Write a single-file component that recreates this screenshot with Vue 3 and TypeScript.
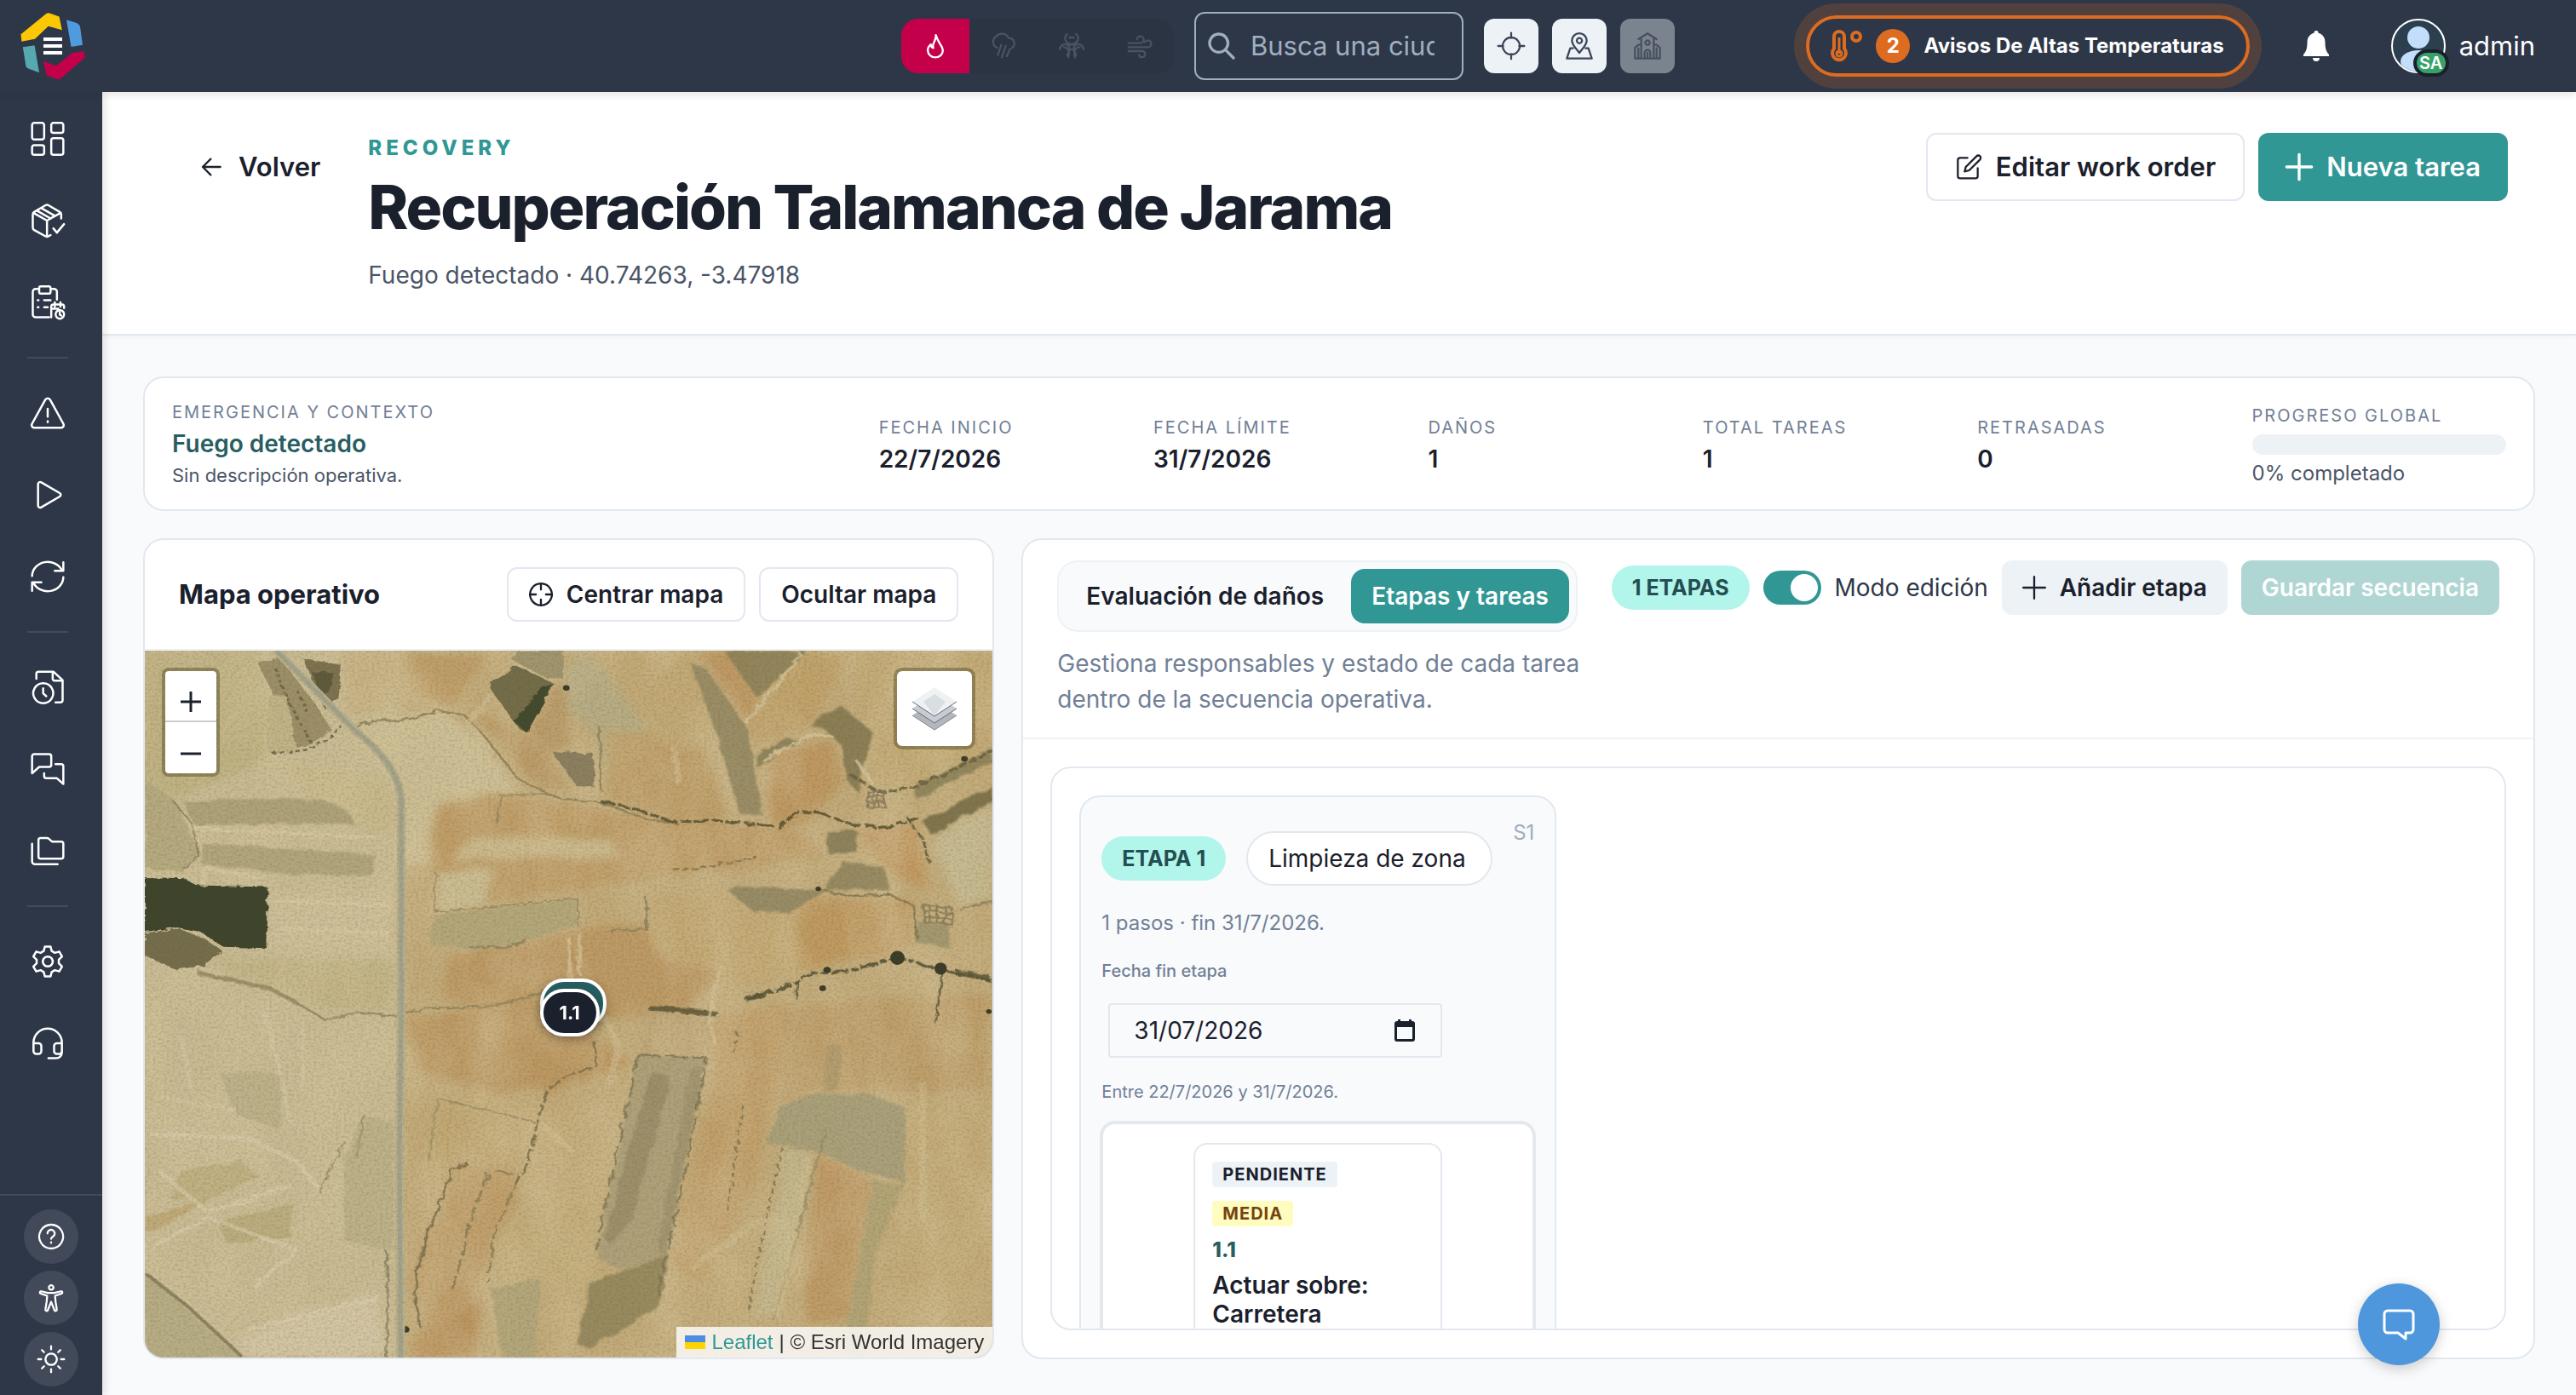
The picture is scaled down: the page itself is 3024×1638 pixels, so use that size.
<script setup lang="ts">
import { ref } from 'vue'

interface Field {
  d: string
  fill: string
}

interface Line {
  d: string
  stroke: string
  w: number
  o?: number
  dash?: string
}

const navGroups: string[][] = [
  [
    'M2.500 .8h5.500a1.500 1.500 0 0 1 1.500 1.500v8.700a1.500 1.500 0 0 1-1.500 1.500H2.500A1.500 1.500 0 0 1 1 11V2.300A1.500 1.500 0 0 1 2.500 .8zM16 .8h5.500A1.500 1.500 0 0 1 23 2.300v4a1.500 1.500 0 0 1-1.500 1.500H16a1.500 1.500 0 0 1-1.500-1.500v-4A1.500 1.500 0 0 1 16 .8zM2.500 16.500H8A1.500 1.500 0 0 1 9.500 18v3.700A1.500 1.500 0 0 1 8 23.200H2.500A1.500 1.500 0 0 1 1 21.700V18a1.500 1.500 0 0 1 1.500-1.500zM16 11.500h5.500A1.500 1.500 0 0 1 23 13v8.700a1.500 1.500 0 0 1-1.500 1.500H16a1.500 1.500 0 0 1-1.500-1.500V13a1.500 1.500 0 0 1 1.500-1.500z',
    'M21.500 10.500V7.500a2 2 0 0 0-1-1.600L12.500 1.200a2 2 0 0 0-2 0L2.500 5.900a2 2 0 0 0-1 1.600v9.500a2 2 0 0 0 1 1.700l8 4.400a2 2 0 0 0 2 0l1.500-.9M1.800 6.500l9.700 5.500 9.700-5.500M11.500 12v11M4.500 5l9.500 5.500M7.500 3.200l9.500 5.400M14 10.500l3-1.900M16 17.500l2.500 3 5-6',
    'M13 22.500H3.500A2 2 0 0 1 1.500 20.500V4.500a2 2 0 0 1 2-2H6M14 2.500h2.500a2 2 0 0 1 2 2V10M7 .8h6a1 1 0 0 1 1 1v3a1 1 0 0 1-1 1H7a1 1 0 0 1-1-1v-3a1 1 0 0 1 1-1zM5 10.500h.5M9.500 10.500H14M5 15.500h.5M9.500 15.500H12M14.500 22.500V15a1.500 1.500 0 0 1 1.500-1.500h6A1.500 1.500 0 0 1 23.500 15v1M14.500 16.500h5M17 12v3M21 12v3M20.500 17.500a3 3 0 1 0 .1 0zM20.500 19v1.700l1 .6',
  ],
  [
    'M10.200 2.800L1 19.500a1.800 1.800 0 0 0 1.700 2.800h18.600A1.800 1.800 0 0 0 23 19.500L13.800 2.800a2 2 0 0 0-3.600 0zM12 9v5.500M12 17.700v.8',
    'M7.500 3.200l13 7.600a1.400 1.400 0 0 1 0 2.400l-13 7.600A1.500 1.500 0 0 1 5.200 19.500v-15a1.500 1.500 0 0 1 2.300-1.300z',
    'M1 11.500A11 10 0 0 1 22 7.500M23 2v6h-6M23 12.500A11 10 0 0 1 2 16.500M1 22v-6h6.500',
  ],
  [
    'M4 6V2.500A1.500 1.500 0 0 1 5.500 1H16l6.500 6v14a1.700 1.700 0 0 1-1.700 1.700H17.500M15.500 1v5a1.300 1.300 0 0 0 1.300 1.300h5.700M8.800 9.200a7 7 0 1 0 .1 0zM8.800 12.800v3.500l2.200 2',
    'M2.500 1.500h10.500A1.500 1.500 0 0 1 14.500 3v6a1.500 1.500 0 0 1-1.500 1.500H6L1 15V3a1.500 1.500 0 0 1 1.500-1.500zM17.500 8.500h4A1.500 1.500 0 0 1 23 10v12.500l-4.500-4H11A1.500 1.500 0 0 1 9.500 17v-2',
    'M7 3h4.500a2 2 0 0 1 1.300.5L15 5.500h6.500A1.500 1.500 0 0 1 23 7v9a1.500 1.500 0 0 1-1.500 1.500H7A1.500 1.500 0 0 1 5.500 16V4.500A1.500 1.500 0 0 1 7 3zM1 7v12.500A2 2 0 0 0 3 21.500h16',
  ],
  [
    'M10 1.500h4l.8 3.100 2.200 1.300 3.100-.9 2 3.500-2.300 2.200v2.600l2.300 2.200-2 3.500-3.100-.9-2.200 1.300-.8 3.100h-4l-.8-3.100L7 18.100l-3.100.9-2-3.500 2.300-2.200v-2.600L1.900 8.500l2-3.500 3.100.9 2.200-1.300zM12 8.500a3.500 3.500 0 1 0 .1 0z',
    'M2 15v-3.500a10 9.800 0 0 1 20 0V18.500a4 4 0 0 1-4 4H12.500M2 12h3.500a2 2 0 0 1 2 2v3.500a2 2 0 0 1-2 2H4a2 2 0 0 1-2-2zM22 12h-3.500a2 2 0 0 0-2 2v3.500a2 2 0 0 0 2 2H20a2 2 0 0 0 2-2z',
  ],
]

const helpIcons: string[] = [
  'M12 1.500a10.500 10.500 0 1 0 .1 0zM8.800 9.200a3.200 3.200 0 1 1 4.800 2.800c-1 .6-1.600 1-1.600 2M12 17v.6',
  'M12 .8a2 2 0 1 0 .1 0zM3.500 6.200l5.500 1.400h6l5.500-1.400a1 1 0 0 1 .6 2l-5.600 1.900.4 5 1.100 7a1.100 1.100 0 0 1-2.200.4L12 15.500l-2.800 7a1.100 1.100 0 0 1-2.200-.4l1.100-7 .4-5-5.600-1.900a1 1 0 0 1 .6-2z',
  'M12 7a5 5 0 1 0 .1 0zM12 .5v2.800M12 20.700v2.800M.5 12h2.800M20.700 12h2.800M3.900 3.900l1.900 1.900M18.200 18.200l1.900 1.900M20.100 3.900l-1.900 1.900M5.800 18.200l-1.900 1.900',
]

const stats = [
  { label: 'Fecha inicio', value: '22/7/2026' },
  { label: 'Fecha límite', value: '31/7/2026' },
  { label: 'Daños', value: '1' },
  { label: 'Total tareas', value: '1' },
  { label: 'Retrasadas', value: '0' },
]

// Broad ground colours, drawn very soft
const fields: Field[] = [
  { d: 'M15 24h460v1516H15z', fill: '#c9bc94' },
  { d: 'M480 24h1070v1516H480z', fill: '#c3ab7a' },
  { d: 'M15 24h200l30 120-10 110-170 90-50-40z', fill: '#c0b384' },
  { d: 'M380 190l170-40 80 70 60 110-20 130-190 20-15-170z', fill: '#cdbf95' },
  { d: 'M360 24h280l-50 130-120-20-80 40z', fill: '#c7b283' },
  { d: 'M480 24h160l-60 120-70-20z', fill: '#bf9f69' },
  { d: 'M620 170l70 20 50 60 50 80-60-10-60-80z', fill: '#bb9b66' },
  { d: 'M770 90l20 140-50 15-35-60z', fill: '#b89864' },
  { d: 'M770 50l50-20 110 170-80 110-20-110-50-50z', fill: '#b8ad84' },
  { d: 'M850 200l160-10 60 190-90 10-130-50z', fill: '#bf9f69' },
  { d: 'M830 24h170l60 150-50 60-60 0-80-120z', fill: '#c3aa77' },
  { d: 'M1020 24h60l40 110-20 40z', fill: '#bf9a64' },
  { d: 'M1200 24h90l-60 150-100 60-25-50z', fill: '#c1a36b' },
  { d: 'M1140 250l110-40 30 90-70 90-60 10z', fill: '#bf9962' },
  { d: 'M1290 24h255v220l-140 80-80-10-20-160z', fill: '#c4ab77' },
  { d: 'M1435 430l110-80v200l-60 20z', fill: '#c6ba91' },
  { d: 'M540 350l130-20 200 40 330 40 50 60-250 30-370 60-90 20-10-120z', fill: '#c09e68' },
  { d: 'M560 470l50-50 250 10 10 40z', fill: '#cbb98b' },
  { d: 'M540 500l110-10-20 80-90 15z', fill: '#cbbd92' },
  { d: 'M560 680l240-60 250-20 20 130-120 90-240-10-150-30z', fill: '#be9b66' },
  { d: 'M920 560l140-20 60 50 110-40 10 140-120 50-180-60z', fill: '#c3a872' },
  { d: 'M1190 560l200-10 20 100-50 30-170 20z', fill: '#c09b62' },
  { d: 'M1300 410l110-20 20 150-70-40z', fill: '#c29860' },
  { d: 'M485 810l240-30 100 70 70 60-180 80-200-60z', fill: '#bd9963' },
  { d: 'M500 1000l230-40 90 100-110 80-180-30z', fill: '#c4ab79' },
  { d: 'M545 985l180 50 0 120-200-35z', fill: '#c2a874' },
  { d: 'M915 800l125 5-10 90-125-5z', fill: '#bea576' },
  { d: 'M1040 810l130-30 0 90-60 300-80 220-70-60 80-370z', fill: '#c2a16c' },
  { d: 'M1170 790l370-30v200l-150 10-130-20-100 50z', fill: '#bfa06c' },
  { d: 'M1390 1000l155 20v350l-155 80z', fill: '#c4ac79' },
  { d: 'M1225 1110l110 40-50 300-80 20z', fill: '#c09c67' },
  { d: 'M1170 1090l55 15-70 350-45-5z', fill: '#c4b68c' },
  { d: 'M580 1120l120 30-90 260-90 80-25-120z', fill: '#c1a06c' },
  { d: 'M690 1170l150 20 0 190-210 10z', fill: '#c4ae7c' },
  { d: 'M490 1500l140-90-20 130h-120z', fill: '#bc955f' },
  { d: 'M250 270l200 20 15 130-90-20-60-60z', fill: '#c9ba8d' },
  { d: 'M240 540l225 0v140l-225-20z', fill: '#cdbf98' },
  { d: 'M110 680l350 10 0 110-110 0-120-60z', fill: '#c4b689' },
  { d: 'M180 1500l250-100 20 140H200z', fill: '#d3c6a6' },
]

// Fields with a visible outline
const strips: Field[] = [
  { d: 'M1060 24h150l-90 100z', fill: '#8f8259' },
  { d: 'M1000 50l30 15 75 130 25 180-40 0-45-180z', fill: '#978b64' },
  { d: 'M1120 250l55-38 20 4-75 60z', fill: '#8d825b' },
  { d: 'M1215 185l55-45 60 60-20 80-5 50-25-30-5-70-35-40z', fill: '#877b53' },
  { d: 'M1405 315l140-80v25l-135 85z', fill: '#8f845b' },
  { d: 'M1420 390l125-75v30l-110 75z', fill: '#7a7049' },
  { d: 'M535 590l260-35v55l-90 35-80 22-95-15z', fill: '#b3a87b' },
  { d: 'M1065 535l70-5 110 10-70 45-60 0z', fill: '#958a65' },
  { d: 'M1275 475l75 15 10 50-120-5z', fill: '#948861' },
  { d: 'M1245 410h55v45l-50 5z', fill: '#8a7f59' },
  { d: 'M1410 605l60 8v50l-65-15z', fill: '#a1976f' },
  { d: 'M905 890l125 8-75 440-20-5-60 20-45-30z', fill: '#ada17a' },
  { d: 'M930 925l35 15-70 300-40 60-10-20z', fill: '#998d69' },
  { d: 'M1000 920l25 0-70 400-15-10z', fill: '#a09470' },
  { d: 'M1165 1000l50-25h110l65 30-3 160-90-30-60-35-100-20z', fill: '#a8a07b' },
  { d: 'M1330 1160l55 10-50 150-20 220-40-10z', fill: '#b3a577' },
  { d: 'M1245 870h28l-5 100h-28z', fill: '#b39e70' },
  { d: 'M640 1395l90-25-10 170h-60z', fill: '#b3a77c' },
  { d: 'M820 1380l140-60-15 110-130 90-20-10z', fill: '#94885e' },
  { d: 'M85 350l120-10 130 5q55 15 55 50l-285 3z', fill: '#aca178' },
  { d: 'M120 437l310 25-5 45-160-5-150-20z', fill: '#afa47b' },
  { d: 'M15 300l55 45 45 115-30 40-70-10z', fill: '#b4a97f' },
  { d: 'M150 930l115 0-5 120-80-30z', fill: '#bdb18a' },
  { d: 'M410 1020l55 20v270l-90-20 0-180z', fill: '#bcb188' },
  { d: 'M60 1200l20-60 110-20 30 30-100 60z', fill: '#c0b083' },
  { d: 'M150 1250l130-40 0 70-120 15z', fill: '#bbad7e' },
  { d: 'M15 1240l110-40-80 60-30 10z', fill: '#bfa878' },
  { d: 'M15 1355l170 185H15z', fill: '#b5ac84' },
]

// Trees, scrub and built-up ground
const woods: Field[] = [
  { d: 'M15 510l70 2 25 15 126 4-2 131-78-3-40-32-45-10-56 10z', fill: '#3e452c' },
  { d: 'M15 630l60-10 45 20 32 25-30 35-50 8-57-30z', fill: '#756e4d' },
  { d: 'M685 55l70 40-50 105-15-10-55-90z', fill: '#746d4a' },
  { d: 'M735 100l18-5-48 105-22-22z', fill: '#434a2e' },
  { d: 'M690 24h80v60l-30-2-65-40z', fill: '#a2966f' },
  { d: 'M218 48l40-8 60 90 35 65-40 30-60 20 20-60-20-50z', fill: '#9d9069' },
  { d: 'M300 40l70 15-5 70-25 25z', fill: '#7d7350' },
  { d: 'M315 70l40 0-5 40-15 10z', fill: '#5f5a3d' },
  { d: 'M240 120l30 0 20 120-52 4z', fill: '#c2b489' },
  { d: 'M750 240l75 5 0 70-30 0z', fill: '#8c8060' },
]

const lines: Line[] = [
  { d: 'M385 190l50-15 60-5 50-18 45 8 40 50 60 90 70 40 80 10 80 35 60 10', stroke: '#8d8058', w: 4 },
  { d: 'M835 345l70 20 60 25 60-2 65 5 70 10 35-35 40 5 60 25 60 5 55-20', stroke: '#55502f', w: 6, dash: '30 7 18 4' },
  { d: 'M1290 290l50 38 60-10 60-30 85-50', stroke: '#6a6341', w: 7, dash: '16 4' },
  { d: 'M1390 380l30 50 12 50', stroke: '#5b5738', w: 4, dash: '15 5' },
  { d: 'M110 715l60 15 70 18 50 32 50 35 60-15 70 8 50-18 60 0 60-5 55-12 40-20 60 10', stroke: '#8b7f58', w: 4 },
  { d: 'M110 715l60 15 70 18 50 32', stroke: '#9c9069', w: 9 },
  { d: 'M1100 772l70-25 50-30 60-5 60-18 35-12 70 25 100 25', stroke: '#4c4b2f', w: 6, dash: '34 5 12 4' },
  { d: 'M1100 770l38-8M925 790l60 5 65 10M1480 715l60 10', stroke: '#5a5637', w: 11 },
  { d: 'M1230 535l50 15 80-3 45 25 5 70', stroke: '#7e744e', w: 4 },
  { d: 'M1455 715l-12 110M1193 735l-3 35', stroke: '#5b5738', w: 4 },
  { d: 'M825 860l5 55-60 25-30 30-15 60-20 100-20 40', stroke: '#716744', w: 4, dash: '26 6' },
  { d: 'M600 1125l-30 12-25 80-20 60-18 80-5 60 12 60', stroke: '#756b48', w: 4 },
  { d: 'M650 1140l40 8M635 1145l-35 110-30 150M690 1150l-45 130-10 100', stroke: '#857a54', w: 4, dash: '30 8' },
  { d: 'M905 890l-40 220-35 200M905 890l125 8-40 250-50 260', stroke: '#7e7453', w: 4, dash: '40 10' },
  { d: 'M1095 1000l-28 230M1165 1090l-45 250-15 100M1085 840l-8 50', stroke: '#716946', w: 3, dash: '10 8' },
  { d: 'M1245 1050l-95 410', stroke: '#9d9168', w: 4 },
  { d: 'M65 345l35 50 12 70-30 25', stroke: '#8d825b', w: 3 },
  { d: 'M540 500l0 85 255-30 3 60M660 335l-10 60M655 335l90-5', stroke: '#978b62', w: 3 },
  { d: 'M835 185l5 140M600 660l60 2 45-18M855 625l65-3v-70', stroke: '#8f835c', w: 4 },
  { d: 'M970 495l50-5 100-25', stroke: '#6f6542', w: 3, dash: '12 4' },
  { d: 'M545 985l-18 130M545 985l175 50M375 1075l-45 110M410 1020l-12 90', stroke: '#9a8d66', w: 3 },
  { d: 'M780 640l3 90M800 630v90M1055 700l-20 110 10 60', stroke: '#d5c39a', w: 7, o: 0.7 },
  { d: 'M1100 180l100-150M1130 260l90-60 40 10M1330 310l-30-50', stroke: '#d6c59b', w: 6, o: 0.8 },
  { d: 'M640 120l-40 60 40 60M970 230l10 80M840 800l30 70-15 90M730 1040l60 60', stroke: '#d3c297', w: 12, o: 0.5 },
  { d: 'M1000 1350l120-100 60 0M1215 1110l-60 340M1420 950l0 300', stroke: '#d0bf92', w: 14, o: 0.5 },
  { d: 'M20 1060l180 10 90 50 40 60M40 1140l90 90 150-60M130 1240l160 70-80 80M130 1240l-100 60M200 1480l240-70', stroke: '#dacdae', w: 9, o: 0.6 },
  { d: 'M80 850l20 120M230 800l30 130 20 120M300 820l0 150M40 980l140 30', stroke: '#d8caa6', w: 8, o: 0.5 },
  { d: 'M100 405l330 20M250 560l210 10M120 530l0-40 100 20M260 620l200 10', stroke: '#d8c9a2', w: 9, o: 0.6 },
  { d: 'M15 1358l80 75 95 105', stroke: '#827858', w: 7 },
  { d: 'M22 1356l80 75 95 105', stroke: '#d0c29c', w: 3 },
  { d: 'M450 1310l5 120-5 110M1545 560l-60 20', stroke: '#8b8160', w: 4 },
  { d: 'M245 245l60-8 40-22 25-30M250 60l20 60 30 70 20 40M290 110l20 50', stroke: '#6c6444', w: 5, dash: '8 6' },
]

const hazardIcons: string[] = [
  'M6.500 13.500A5.500 5.500 0 0 1 5.500 3.700 6.500 6.500 0 0 1 16.500 5a4.800 4.800 0 0 1 2.500 9M10 11l-3 9M14 12l-3.500 10M17.500 15l-2.500 6',
  'M8 1.500a5.500 5 0 0 0 2.500 8.500M16 1.500a5.500 5 0 0 1-2.500 8.500M10 4.500h4M12 10.500a2.300 2.300 0 1 0 .1 0zM9.800 12L7 10.500a5 5 0 0 0-5.500 4.500M14.200 12l2.800-1.500a5 5 0 0 1 5.500 4.500M5 13c3 0 6 3 4 9M19 13c-3 0-6 3-4 9M10.500 15l-2.500 5M13.500 15l2.500 5',
  'M2 9.500h10.500a3 3 0 1 0-3-3.200M2 13h17.500a3 3 0 1 0-3-4.500M2 16.500h12a2.700 2.700 0 1 1-2.700 3.200',
]

const search = ref('')
const editMode = ref(true)
const stageName = ref('Limpieza de zona')
const stageDate = ref('31/07/2026')
</script>

<template>
  <div class="app">
    <header class="topbar">
      <a class="logo" href="#" aria-label="Inicio">
        <svg viewBox="24 14 76 78" width="76" height="78">
          <path fill="#fbc803" d="M25.400 47.700L24.500 39.300 54 15.200Q56.500 13.800 59 14.700L69.500 18.600 72.800 34.300 56.700 29.700 41 44.700z" />
          <path fill="#4f9bdf" d="M78 22.300L90 26Q93 27.500 94 30L97 51.700 83.500 54z" />
          <path fill="#56a9b0" d="M26.800 54.300L40.600 52.300 46 84.300 34 79.700Q31 78.500 30.400 76.700z" />
          <path fill="#c5004b" d="M51 71L66 76.300 84.800 61.300 98.700 59 99.600 66.700 71.400 91Q69 92.600 66.500 91.700L54.500 87.300z" />
          <path fill="#fff" d="M51 43h22v4H51zM51 51h22v4H51zM51 59h22v4H51z" />
        </svg>
      </a>
      <div class="tools">
        <div class="hazards">
          <button class="hazard on" type="button" aria-label="Incendios">
            <svg class="ic28" viewBox="0 0 24 24"><path d="M12.500 1c.5 4-1.500 6-2.500 9-.5 1.500-.5 3 0 4-1.500-.5-2.500-1.800-2.500-3.500C5 12.500 4 14.500 4.500 17a7.500 6.500 0 0 0 15 0c.3-3-1.500-5-3-7.500-1.500-2.600-3-5-4-8.500z" /></svg>
          </button>
          <button v-for="d in hazardIcons" :key="d" class="hazard" type="button" aria-label="Riesgo" disabled>
            <svg class="ic32" viewBox="0 0 24 24"><path :d="d" /></svg>
          </button>
        </div>
        <label class="search">
          <svg class="ic32 bold" viewBox="0 0 24 24"><path d="M9.500 1.500a8 8 0 1 0 .1 0zM15.500 15.500l7 7" /></svg>
          <input v-model="search" type="text" placeholder="Busca una ciudad" aria-label="Buscar" />
        </label>
        <div class="quick">
          <button type="button" aria-label="Ubicación">
            <svg class="ic32" viewBox="0 0 24 24"><path d="M12 4.500a7.500 7.500 0 1 0 .1 0zM12 .5v4.500M12 19v4.500M.5 12H5M19 12h4.500" /></svg>
          </button>
          <button type="button" aria-label="Mapa">
            <svg class="ic32" viewBox="0 0 24 24"><path d="M12 18c-3-4-6.500-7-6.500-10.700a6.500 6.500 0 0 1 13 0C18.500 11 15 14 12 18zM12 5a2.300 2.300 0 1 0 .1 0zM6.500 14H4L1 23h22l-3-9h-2.500" /></svg>
          </button>
          <button type="button" aria-label="Municipio" disabled>
            <svg class="ic32" viewBox="0 0 24 24"><path d="M4 6l8-5 8 5M6.500 5v18M17.500 5v18M6.500 11H4l-3 2.500V23h22v-9.500L20 11h-2.500M12 7a2 2 0 1 0 .1 0zM9.500 23v-5a2.500 2.500 0 0 1 5 0v5M12 18v5M4 14v9M20 14v9" /></svg>
          </button>
        </div>
      </div>
      <div class="account">
        <button class="warning" type="button">
          <svg viewBox="0 0 38 38" width="38" height="38" fill="none" stroke="#dd6b20" stroke-width="4">
            <path d="M5 22V8a6 6 0 0 1 12 0V22a8 8 0 1 1-12 0z" />
            <path d="M11 9v19" stroke-width="3" />
            <circle cx="11" cy="28" r="3" stroke-width="3" />
            <circle cx="31" cy="8" r="5" />
          </svg>
          <span class="count">2</span>
          <span>Avisos De Altas Temperaturas</span>
        </button>
        <button class="bell" type="button" aria-label="Notificaciones">
          <svg viewBox="0 0 32 36" width="32" height="36" fill="#fff"><path d="M16 0a2.500 2.500 0 0 1 2.500 2.800c5 1.300 8 5.500 8 10.700 0 8 1.500 11 4.500 14.500V30H1v-2c3-3.500 4.500-6.500 4.500-14.500 0-5.200 3-9.400 8-10.700A2.500 2.500 0 0 1 16 0zM12 32h8a4 4 0 0 1-8 0z" /></svg>
        </button>
        <a class="user" href="#">
          <span class="avatar">
            <svg viewBox="0 0 64 64" width="64" height="64">
              <defs><clipPath id="av"><circle cx="32" cy="32" r="30" /></clipPath></defs>
              <circle cx="32" cy="32" r="31" fill="#2c3f4e" stroke="#fff" stroke-width="2" />
              <circle cx="32" cy="22" r="13" fill="#c3defa" />
              <ellipse cx="32" cy="50" rx="21" ry="13" fill="#c3defa" clip-path="url(#av)" />
            </svg>
            <span class="role">SA</span>
          </span>
          <span>admin</span>
        </a>
      </div>
    </header>

    <aside class="sidebar">
      <nav>
        <ul v-for="(group, g) in navGroups" :key="g">
          <li v-for="d in group" :key="d">
            <a href="#" aria-label="Sección"><svg class="ic40" viewBox="0 0 24 24"><path :d="d" /></svg></a>
          </li>
        </ul>
      </nav>
      <div class="help">
        <button v-for="d in helpIcons" :key="d" type="button" aria-label="Ayuda">
          <svg class="ic32" viewBox="0 0 24 24"><path :d="d" /></svg>
        </button>
      </div>
    </aside>

    <main>
      <section class="pagehead">
        <button class="btn ghost" type="button">
          <svg class="ic32" viewBox="0 0 24 24"><path d="M20 12H4.500M11.500 5l-7 7 7 7" /></svg>Volver
        </button>
        <div class="heading">
          <p class="kicker">RECOVERY</p>
          <h1>Recuperación Talamanca de Jarama</h1>
          <p class="sub">Fuego detectado · 40.74263, -3.47918</p>
        </div>
        <div class="actions">
          <button class="btn outline" type="button">
            <svg class="ic32" viewBox="0 0 24 24"><path d="M11 4H4.500A2 2 0 0 0 2.500 6v14a2 2 0 0 0 2 2H18a2 2 0 0 0 2-2v-7M19 2.500a2 2 0 0 1 3 3L12.500 15l-4 1 1-4z" /></svg>Editar work order
          </button>
          <button class="btn primary" type="button">
            <svg class="ic32 bold" viewBox="0 0 24 24"><path d="M12 1v22M1 12h22" /></svg>Nueva tarea
          </button>
        </div>
      </section>

      <div class="content">
        <section class="summary">
          <div>
            <p class="label">EMERGENCIA Y CONTEXTO</p>
            <p class="value teal">Fuego detectado</p>
            <p class="note">Sin descripción operativa.</p>
          </div>
          <div v-for="s in stats" :key="s.label">
            <p class="label">{{ s.label.toUpperCase() }}</p>
            <p class="value">{{ s.value }}</p>
          </div>
          <div>
            <p class="label">PROGRESO GLOBAL</p>
            <div class="bar" role="progressbar" aria-valuenow="0" aria-valuemin="0" aria-valuemax="100"></div>
            <p class="done">0% completado</p>
          </div>
        </section>

        <div class="panels">
          <section class="card mapcard">
            <div class="maphead">
              <h2>Mapa operativo</h2>
              <button class="btn small outline" type="button">
                <svg class="ic28" viewBox="0 0 24 24"><path d="M12 1a11 11 0 1 0 .1 0zM12 1v6M12 17v6M1 12h6M17 12h6" /></svg>Centrar mapa
              </button>
              <button class="btn small outline" type="button">Ocultar mapa</button>
            </div>
            <div class="map">
              <svg class="terrain" viewBox="15 24 1531 1516" preserveAspectRatio="none" aria-hidden="true">
                <defs>
                  <filter id="soft" x="-5%" y="-5%" width="110%" height="110%" color-interpolation-filters="sRGB">
                    <feTurbulence type="fractalNoise" baseFrequency="0.012" numOctaves="3" seed="4" result="n" />
                    <feDisplacementMap in="SourceGraphic" in2="n" scale="24" />
                    <feGaussianBlur stdDeviation="9" />
                  </filter>
                  <filter id="strip" x="-5%" y="-5%" width="110%" height="110%" color-interpolation-filters="sRGB">
                    <feTurbulence type="fractalNoise" baseFrequency="0.040" numOctaves="3" seed="14" result="n" />
                    <feDisplacementMap in="SourceGraphic" in2="n" scale="12" />
                    <feGaussianBlur stdDeviation="2" />
                  </filter>
                  <filter id="edge" x="-5%" y="-5%" width="110%" height="110%" color-interpolation-filters="sRGB">
                    <feTurbulence type="fractalNoise" baseFrequency="0.060" numOctaves="3" seed="9" result="n" />
                    <feDisplacementMap in="SourceGraphic" in2="n" scale="12" />
                    <feGaussianBlur stdDeviation="1" />
                  </filter>
                  <filter id="light" x="0" y="0" width="100%" height="100%" color-interpolation-filters="sRGB">
                    <feTurbulence type="fractalNoise" baseFrequency="0.010 0.005" numOctaves="3" seed="21" />
                    <feColorMatrix values="0 0 0 0 0.840  0 0 0 0 0.780  0 0 0 0 0.620  0 2 0 0 -0.700" />
                  </filter>
                  <filter id="grain" x="0" y="0" width="100%" height="100%" color-interpolation-filters="sRGB">
                    <feTurbulence type="fractalNoise" baseFrequency="0.200" numOctaves="3" seed="3" />
                    <feColorMatrix values="0 0 0 0 0.350  0 0 0 0 0.300  0 0 0 0 0.180  0 1.400 0 0 -0.550" />
                  </filter>
                </defs>
                <rect x="15" y="24" width="1531" height="1516" fill="#c6b68c" />
                <g filter="url(#soft)">
                  <path v-for="f in fields" :key="f.d" :d="f.d" :fill="f.fill" />
                </g>
                <rect x="15" y="24" width="1531" height="1516" filter="url(#light)" opacity="0.500" />
                <g filter="url(#strip)" opacity="0.900">
                  <path v-for="f in strips" :key="f.d" :d="f.d" :fill="f.fill" />
                </g>
                <g filter="url(#edge)">
                  <path v-for="f in woods" :key="f.d" :d="f.d" :fill="f.fill" />
                  <path
                    v-for="l in lines"
                    :key="l.d"
                    :d="l.d"
                    fill="none"
                    :stroke="l.stroke"
                    :stroke-width="l.w"
                    :stroke-dasharray="l.dash"
                    :opacity="l.o ?? 0.85"
                    stroke-linejoin="round"
                  />
                  <path d="M1320 325h30v35h-30zM1330 325v35M1340 325v35M1320 337h30M1320 349h30M1418 568l55 8v36l-50-6zM1432 570v38M1446 572v38M1460 574v38M1420 580l53 8M1420 594l53 6" fill="none" stroke="#857a59" stroke-width="3" />
                </g>
                <g fill="#3b3c27">
                  <ellipse cx="1374" cy="683" rx="13" ry="15" />
                  <ellipse cx="1452" cy="706" rx="11" ry="13" />
                  <circle cx="1247" cy="709" r="7" />
                  <circle cx="1239" cy="748" r="6" />
                  <circle cx="1495" cy="256" r="6" />
                  <circle cx="776" cy="104" r="6" />
                  <circle cx="1539" cy="798" r="5" />
                  <circle cx="1231" cy="535" r="5" />
                  <circle cx="486" cy="1480" r="7" />
                </g>
                <path d="M252 24L395 196Q475 270 478 345V800L475 1100 477 1540" fill="none" stroke="#b9b08c" stroke-width="16" />
                <path d="M252 24L395 196Q475 270 478 345V800L475 1100 477 1540" fill="none" stroke="#a3a38c" stroke-width="8" />
                <rect x="15" y="24" width="1531" height="1516" filter="url(#grain)" opacity="0.300" />
              </svg>
              <div class="zoom">
                <button type="button" aria-label="Acercar"><svg viewBox="0 0 24 24" width="24" height="24"><path d="M12 0v24M0 12h24" /></svg></button>
                <button type="button" aria-label="Alejar"><svg viewBox="0 0 24 24" width="24" height="24"><path d="M0 12h24" /></svg></button>
              </div>
              <button class="layers" type="button" aria-label="Capas">
                <svg viewBox="0 0 52 52" width="52" height="52">
                  <path d="M0 34L26 17 52 34 26 51z" fill="#b3b7bc" /><path d="M0 34L26 51 52 34" fill="none" stroke="#7c8595" stroke-width="1" />
                  <path d="M0 26L26 9 52 26 26 43z" fill="#c9cccf" /><path d="M0 26L26 43 52 26" fill="none" stroke="#5f6b80" stroke-width="1" />
                  <path d="M0 18L26 1 52 18 26 35z" fill="#eff1f3" /><path d="M13 18L26 9 39 18 26 34z" fill="#d9dee1" /><path d="M0 18L26 35 52 18" fill="none" stroke="#5f6b80" stroke-width="1" />
                </svg>
              </button>
              <span class="pin area"></span>
              <span class="pin task">1.1</span>
              <div class="credit">
                <svg viewBox="0 0 24 16" width="24" height="16"><path fill="#4c8fe0" d="M0 0h24v8H0z" /><path fill="#ffd500" d="M0 8h24v8H0z" /></svg>
                <a href="#">Leaflet</a> | © Esri World Imagery
              </div>
            </div>
          </section>

          <section class="card work">
            <div class="workhead">
              <div class="intro">
                <div class="tabs" role="tablist">
                  <button class="btn small" type="button" role="tab">Evaluación de daños</button>
                  <button class="btn small primary" type="button" role="tab">Etapas y tareas</button>
                </div>
                <p>Gestiona responsables y estado de cada tarea dentro de la secuencia operativa.</p>
              </div>
              <div class="controls">
                <span class="chip">1 ETAPAS</span>
                <label class="switch"><input v-model="editMode" type="checkbox" role="switch" />Modo edición</label>
                <button class="btn small soft" type="button">
                  <svg class="ic28" viewBox="0 0 24 24"><path d="M12 1v22M1 12h22" /></svg>Añadir etapa
                </button>
                <button class="btn small primary" type="button" disabled>Guardar secuencia</button>
              </div>
            </div>
            <div class="board">
              <article class="stage">
                <div class="stagehead">
                  <span class="chip">ETAPA 1</span>
                  <input v-model="stageName" class="stagename" type="text" aria-label="Nombre de la etapa" />
                  <span class="code">S1</span>
                </div>
                <p class="steps">1 pasos · fin 31/7/2026.</p>
                <label class="datelabel" for="stage-date">Fecha fin etapa</label>
                <div class="date">
                  <input id="stage-date" v-model="stageDate" type="text" />
                  <button type="button" aria-label="Abrir calendario">
                    <svg viewBox="0 0 24 26" width="24" height="26"><path fill="#1a202c" fill-rule="evenodd" d="M4 0h3v2h10V0h3v2h1a3 3 0 0 1 3 3v18a3 3 0 0 1-3 3H3a3 3 0 0 1-3-3V5a3 3 0 0 1 3-3h1zM3 9v14h18V9z" /></svg>
                  </button>
                </div>
                <p class="range">Entre 22/7/2026 y 31/7/2026.</p>
                <div class="lane">
                  <div class="task-card">
                    <span class="tag">PENDIENTE</span>
                    <span class="tag medium">MEDIA</span>
                    <p class="num">1.1</p>
                    <h3>Actuar sobre: Carretera</h3>
                  </div>
                </div>
              </article>
            </div>
          </section>
        </div>
      </div>
      <button class="chat" type="button" aria-label="Chat">
        <svg viewBox="0 0 40 40" width="40" height="40" fill="none" stroke="#fff" stroke-width="3" stroke-linejoin="round"><path d="M7 4h26a4 4 0 0 1 4 4v18a4 4 0 0 1-4 4h-5v7l-9-7H7a4 4 0 0 1-4-4V8a4 4 0 0 1 4-4z" /></svg>
      </button>
    </main>
  </div>
</template>

<style>
body {
  background: #f9fafc;
}
</style>

<style scoped>
* {
  box-sizing: border-box;
}
.app {
  display: grid;
  grid-template: 108px 1fr / 120px 1fr;
  height: 100vh;
  overflow: hidden;
  font: 400 28px/1.5 Inter, 'Noto Sans', sans-serif;
  color: #1a202c;
}
p, h1, h2, h3, ul {
  margin: 0;
  padding: 0;
}
button, input {
  font: inherit;
  color: inherit;
  margin: 0;
}
button {
  display: flex;
  align-items: center;
  justify-content: center;
  padding: 0;
  border: 0;
  background: none;
}
a {
  color: inherit;
  text-decoration: none;
}
svg {
  display: block;
  flex: none;
}
.ic28, .ic32, .ic40 {
  fill: none;
  stroke: currentColor;
  stroke-width: 2;
  stroke-linecap: round;
  stroke-linejoin: round;
  overflow: visible;
}
.ic28 { width: 28px; height: 28px; }
.ic32 { width: 32px; height: 32px; stroke-width: 1.7; }
.ic40 { width: 40px; height: 40px; stroke-width: 1.5; }
.ic32.bold { stroke-width: 2.5; }

.topbar {
  grid-column: 1 / -1;
  position: relative;
  z-index: 2;
  display: grid;
  grid-template-columns: 1fr auto 1fr;
  align-items: center;
  padding: 0 24px;
  background: #2d3748;
  box-shadow: 0 4px 8px rgba(60, 30, 10, 0.1);
}
.tools {
  display: flex;
  align-items: center;
  gap: 24px;
}
.logo {
  justify-self: start;
}
.hazards {
  display: flex;
  height: 64px;
  border-radius: 20px;
  overflow: hidden;
  background: #2a3443;
}
.hazard {
  width: 80px;
  color: #4b535f;
}
.hazard.on {
  background: #c5004b;
  color: #fff;
}
.search {
  display: flex;
  align-items: center;
  width: 316px;
  height: 80px;
  padding: 0 32px 0 14px;
  gap: 18px;
  border: 2px solid #a0aec0;
  border-radius: 12px;
  color: #a0aec0;
}
.search input {
  flex: 1;
  min-width: 0;
  padding: 0;
  border: 0;
  background: none;
  font-size: 31px;
}
.search input::placeholder {
  color: #a0aec0;
  opacity: 1;
}
.quick {
  display: flex;
  gap: 16px;
}
.quick button {
  width: 64px;
  height: 64px;
  border-radius: 12px;
  background: #edf2f7;
  color: #3a4558;
}
.quick button:disabled {
  background: #7b838f;
  color: #48505f;
}
.account {
  display: flex;
  align-items: center;
  justify-self: end;
  margin-right: 24px;
}
.warning {
  height: 72px;
  gap: 16px;
  padding: 0 26px 0 24px;
  border: 4px solid #dd6b20;
  border-radius: 36px;
  box-shadow: 0 0 0 14px rgba(221, 107, 32, 0.2);
  color: #fff;
  font-size: 24px;
  font-weight: 700;
}
.count {
  width: 40px;
  height: 40px;
  line-height: 40px;
  border-radius: 50%;
  background: #dd6b20;
}
.bell {
  margin: 0 72px 0 62px;
}
.user {
  display: flex;
  align-items: center;
  gap: 16px;
  color: #fff;
  font-size: 31px;
}
.avatar {
  position: relative;
}
.role {
  position: absolute;
  right: -4px;
  bottom: -4px;
  width: 42px;
  height: 32px;
  border: 4px solid #1a202c;
  border-radius: 16px;
  background: #38a169;
  font-size: 20px;
  font-weight: 600;
  line-height: 24px;
  text-align: center;
}

.sidebar {
  position: relative;
  z-index: 1;
  display: flex;
  flex-direction: column;
  justify-content: space-between;
  background: #2d3748;
  color: #fff;
  box-shadow: 4px 0 8px rgba(60, 30, 10, 0.1);
}
.sidebar nav {
  padding: 7px 8px 0 0;
}
.sidebar ul {
  display: flex;
  flex-direction: column;
  align-items: center;
  list-style: none;
}
.sidebar ul + ul::before {
  content: '';
  width: 48px;
  height: 2px;
  margin: 16px 0;
  background: #424b5b;
}
.sidebar li a {
  display: flex;
  align-items: center;
  height: 96px;
}
.help {
  display: flex;
  flex-direction: column;
  align-items: center;
  gap: 8px;
  padding: 16px 0 10px;
  border-top: 2px solid #424b5b;
}
.help button {
  width: 64px;
  height: 64px;
  border-radius: 50%;
  background: #424a5a;
}

main {
  position: relative;
  display: flex;
  flex-direction: column;
  min-width: 0;
  min-height: 0;
  background: #f9fafc;
}
.pagehead {
  display: flex;
  align-items: flex-start;
  padding: 48px 80px;
  background: #fff;
  border-bottom: 2px solid #e2e8f0;
  box-shadow: 0 2px 4px rgba(0, 0, 0, 0.04);
}
.heading {
  flex: 1;
  margin-left: 24px;
}
.kicker {
  color: #319795;
  font-size: 24px;
  font-weight: 800;
  line-height: 36px;
  letter-spacing: 5px;
}
h1 {
  margin: 8px 0 16px;
  font-size: 71px;
  font-weight: 800;
  line-height: 86px;
  letter-spacing: -2px;
}
.sub {
  color: #4a5568;
}
.actions {
  display: flex;
  gap: 16px;
}
.btn {
  height: 80px;
  gap: 16px;
  padding: 0 32px;
  border-radius: 12px;
  font-size: 31px;
  font-weight: 600;
  white-space: nowrap;
}
.btn.small {
  height: 64px;
  padding: 0 24px;
  font-size: 28px;
}
.btn.outline {
  border: 2px solid #e2e8f0;
}
.btn.primary {
  background: #319795;
  color: #fff;
}
.btn.primary:disabled {
  background: #b0d6d3;
}
.btn.soft {
  background: #edf2f7;
}

.content {
  flex: 1;
  min-height: 0;
  display: flex;
  flex-direction: column;
  gap: 32px;
  padding: 48px 48px 42px;
}
.summary {
  display: grid;
  grid-template-columns: 27fr repeat(6, 10fr);
  align-items: center;
  column-gap: 24px;
  padding: 22px 32px;
  background: #fff;
  border: 2px solid #e2e8f0;
  border-radius: 24px;
}
.label {
  color: #718096;
  font-size: 20px;
  line-height: 36px;
  letter-spacing: 2px;
  white-space: nowrap;
}
.value {
  font-weight: 600;
  line-height: 38px;
}
.teal {
  color: #285e61;
}
.note {
  color: #4a5568;
  font-size: 22px;
  line-height: 36px;
}
.bar {
  height: 24px;
  margin: 4px 0 6px;
  border-radius: 12px;
  background: #edf2f7;
}
.done {
  color: #4a5568;
  font-size: 24px;
  line-height: 32px;
}
.panels {
  flex: 1;
  min-height: 0;
  display: grid;
  grid-template-columns: 9fr 16fr;
  gap: 32px;
}
.card {
  display: flex;
  flex-direction: column;
  min-width: 0;
  min-height: 0;
  overflow: hidden;
  background: #fff;
  border: 2px solid #e2e8f0;
  border-radius: 24px;
}
.maphead {
  display: flex;
  align-items: center;
  gap: 16px;
  padding: 32px 40px;
  border-bottom: 2px solid #edf2f7;
}
h2 {
  flex: 1;
  font-size: 31px;
  font-weight: 700;
  line-height: 40px;
}
.map {
  position: relative;
  flex: 1;
  min-height: 0;
}
.terrain {
  position: absolute;
  inset: 0;
  width: 100%;
  height: 100%;
}
.zoom, .layers {
  position: absolute;
  top: 20px;
  border: 4px solid rgba(50, 45, 10, 0.35);
  border-radius: 8px;
  background: #fff;
  background-clip: padding-box;
}
.zoom {
  left: 20px;
}
.zoom button {
  width: 60px;
  height: 60px;
  padding-top: 14px;
}
.zoom button:first-child {
  border-bottom: 2px solid #ccc;
}
.zoom path {
  stroke: #1a202c;
  stroke-width: 3;
}
.layers {
  right: 20px;
  width: 96px;
  height: 96px;
  border-radius: 10px;
}
.pin {
  position: absolute;
  border: 4px solid #fff;
  border-radius: 28px;
  box-shadow: 0 4px 12px rgba(0, 0, 0, 0.3);
}
.pin.area {
  left: calc(50% - 34px);
  top: calc(50% - 30px);
  width: 78px;
  height: 58px;
  background: #285e61;
}
.pin.task {
  left: calc(50% - 34px);
  top: calc(50% - 18px);
  width: 70px;
  height: 56px;
  background: #1a202c;
  color: #fff;
  font-size: 22px;
  font-weight: 700;
  line-height: 48px;
  text-align: center;
}
.credit {
  position: absolute;
  right: 0;
  bottom: 0;
  display: flex;
  align-items: center;
  gap: 7px;
  padding: 0 10px;
  background: rgba(255, 255, 255, 0.8);
  color: #333;
  font: 24px/36px 'Liberation Sans', Arial, sans-serif;
}
.credit a {
  color: #319795;
}

.workhead {
  display: flex;
  justify-content: space-between;
  gap: 16px;
  padding: 24px 40px;
  border-bottom: 2px solid #edf2f7;
}
.intro {
  display: flex;
  flex-direction: column;
  align-items: flex-start;
  gap: 16px;
  max-width: 630px;
}
.intro p {
  color: #718096;
}
.tabs {
  display: flex;
  gap: 8px;
  padding: 8px;
  background: #f9fafc;
  border: 2px solid #edf2f7;
  border-radius: 24px;
}
.tabs .btn {
  border-radius: 16px;
}
.controls {
  display: flex;
  align-items: center;
  align-self: flex-start;
  gap: 16px;
}
.chip {
  flex: none;
  height: 52px;
  padding: 0 24px;
  border-radius: 26px;
  background: #b2f5ea;
  color: #234e52;
  font-size: 25px;
  font-weight: 700;
  line-height: 52px;
  white-space: nowrap;
}
.switch {
  display: flex;
  align-items: center;
  gap: 16px;
  color: #2d3748;
  white-space: nowrap;
}
.switch input {
  appearance: none;
  display: flex;
  width: 68px;
  height: 40px;
  padding: 4px;
  border-radius: 20px;
  background: #cbd5e0;
}
.switch input::before {
  content: '';
  width: 32px;
  height: 32px;
  border-radius: 50%;
  background: #fff;
}
.switch input:checked {
  justify-content: flex-end;
  background: #319795;
}
.board {
  flex: 1;
  min-height: 0;
  margin: 32px;
  padding: 32px;
  border: 2px solid #e2e8f0;
  border-radius: 24px;
  overflow: hidden;
}
.stage {
  display: flex;
  flex-direction: column;
  width: 560px;
  padding: 24px 24px 32px;
  background: #f9fafc;
  border: 2px solid #e2e8f0;
  border-radius: 24px;
}
.stagehead {
  display: flex;
  align-items: center;
  gap: 24px;
  padding-top: 16px;
}
.stagename {
  flex: 1;
  min-width: 0;
  height: 64px;
  padding: 0 24px;
  border: 2px solid #e2e8f0;
  border-radius: 32px;
  background: #fff;
}
.code {
  align-self: flex-start;
  margin-top: -16px;
  color: #a0aec0;
  font-size: 24px;
}
.steps {
  margin-top: 24px;
  color: #718096;
  font-size: 24px;
  line-height: 40px;
}
.datelabel {
  margin: 20px 0 22px;
  color: #718096;
  font-size: 20px;
  font-weight: 500;
  line-height: 32px;
}
.date {
  display: flex;
  align-items: center;
  width: 392px;
  height: 64px;
  margin-left: 8px;
  padding: 0 30px 0 28px;
  border: 2px solid #e2e8f0;
  border-radius: 4px;
}
.date input {
  flex: 1;
  min-width: 0;
  padding: 0;
  border: 0;
  background: none;
}
.range {
  margin: 24px 0 20px;
  color: #718096;
  font-size: 20px;
  line-height: 32px;
}
.lane {
  display: flex;
  justify-content: center;
  padding: 22px;
  background: #fff;
  border: 2px solid #e2e8f0;
  border-radius: 16px;
  box-shadow: 0 0 0 2px rgba(0, 0, 0, 0.07);
}
.task-card {
  display: flex;
  flex-direction: column;
  align-items: flex-start;
  width: 292px;
  height: 360px;
  padding: 20px;
  border: 2px solid #e2e8f0;
  border-radius: 16px;
}
.tag {
  margin-bottom: 16px;
  padding: 0 12px;
  border-radius: 4px;
  background: #edf2f7;
  font-size: 20px;
  font-weight: 700;
  line-height: 30px;
  letter-spacing: 1px;
}
.tag.medium {
  background: #fefcbf;
  color: #744210;
}
.num {
  color: #285e61;
  font-size: 24px;
  font-weight: 800;
  line-height: 24px;
}
h3 {
  margin-top: 12px;
  font-size: 28px;
  font-weight: 600;
  line-height: 34px;
}
.chat {
  position: absolute;
  right: 160px;
  bottom: 35px;
  width: 96px;
  height: 96px;
  border-radius: 50%;
  background: #4f97dc;
  box-shadow: 0 4px 16px rgba(0, 0, 0, 0.2);
}
</style>
